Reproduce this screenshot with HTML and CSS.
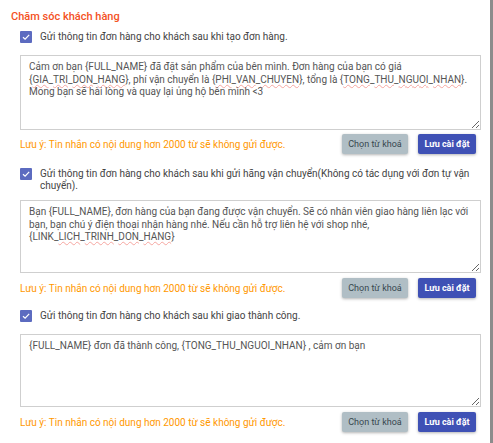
FILE: index.html
```html
<!DOCTYPE html>
<html lang="vi">
<head>
<meta charset="utf-8">
<title>Chăm sóc khách hàng</title>
<link rel="stylesheet" href="styles.css">
</head>
<body>
<div class="page">
  <h3 class="title">Chăm sóc khách hàng</h3>

  <div class="section s1">
    <label class="check-row">
      <span class="checkbox"><svg viewBox="0 0 12 12" width="12" height="12"><path d="M3 6.2 L5.1 8.2 L9.2 3.8" fill="none" stroke="#fff" stroke-width="1.2"/></svg></span>
      <span class="label">Gửi thông tin đơn hàng cho khách sau khi tạo đơn hàng.</span>
    </label>
    <div class="textarea">Cảm ơn bạn {FULL_NAME} đã đặt sản phẩm của bên mình. Đơn hàng của bạn có giá {<span class="sp">GIA</span>_<span class="sp">TRI</span>_<span class="sp">DON</span>_<span class="sp">HANG</span>}, phí vận chuyển là {<span class="sp">PHI</span>_<span class="sp">VAN</span>_<span class="sp">CHUYEN</span>}, tổng là {<span class="sp">TONG</span>_<span class="sp">THU</span>_<span class="sp">NGUOI</span>_<span class="sp">NHAN</span>}. Mong bạn sẽ hài lòng và quay lại ủng hộ bên mình &lt;3</div>
    <div class="footer">
      <span class="note">Lưu ý: Tin nhắn có nội dung hơn 2000 từ sẽ không gửi được.</span>
      <div class="actions">
        <button class="btn btn-grey">Chọn từ khoá</button>
        <button class="btn btn-primary">Lưu cài đặt</button>
      </div>
    </div>
  </div>

  <div class="section s2">
    <label class="check-row">
      <span class="checkbox"><svg viewBox="0 0 12 12" width="12" height="12"><path d="M3 6.2 L5.1 8.2 L9.2 3.8" fill="none" stroke="#fff" stroke-width="1.2"/></svg></span>
      <span class="label">Gửi thông tin đơn hàng cho khách sau khi gửi hãng vận chuyển(Không có tác dụng với đơn tự vận chuyển).</span>
    </label>
    <div class="textarea">Bạn {FULL_NAME}, đơn hàng của bạn đang được vận chuyển. Sẽ có nhân viên giao hàng liên lạc với bạn, bạn chú ý điện thoại nhận hàng nhé. Nếu cần hỗ trợ liên hệ với shop nhé, {LINK_<span class="sp">LICH</span>_<span class="sp">TRINH</span>_<span class="sp">DON</span>_<span class="sp">HANG</span>}</div>
    <div class="footer">
      <span class="note">Lưu ý: Tin nhắn có nội dung hơn 2000 từ sẽ không gửi được.</span>
      <div class="actions">
        <button class="btn btn-grey">Chọn từ khoá</button>
        <button class="btn btn-primary">Lưu cài đặt</button>
      </div>
    </div>
  </div>

  <div class="section s3">
    <label class="check-row">
      <span class="checkbox"><svg viewBox="0 0 12 12" width="12" height="12"><path d="M3 6.2 L5.1 8.2 L9.2 3.8" fill="none" stroke="#fff" stroke-width="1.2"/></svg></span>
      <span class="label">Gửi thông tin đơn hàng cho khách sau khi giao thành công.</span>
    </label>
    <div class="textarea">{FULL_NAME} đơn đã thành công, {TONG_THU_NGUOI_NHAN} , cảm ơn bạn</div>
    <div class="footer">
      <span class="note">Lưu ý: Tin nhắn có nội dung hơn 2000 từ sẽ không gửi được.</span>
      <div class="actions">
        <button class="btn btn-grey">Chọn từ khoá</button>
        <button class="btn btn-primary">Lưu cài đặt</button>
      </div>
    </div>
  </div>
</div>
</body>
</html>
```
FILE: styles.css
```css
* { box-sizing: border-box; }
html, body { margin: 0; padding: 0; background: #fff; }
body { font-family: Roboto, "Noto Sans", Arial, sans-serif; }

.page {
  width: 493px;
  height: 443px;
  border-right: 3px solid #8c8c8c;
  padding: 10px 0 0 11px;
  overflow: hidden;
}

.title {
  margin: 0;
  font-size: 11px;
  line-height: 13px;
  font-weight: 500;
  color: #f4511e;
}

.section {
  margin-left: 9px;
  width: 461px;
}

.s1 { margin-top: 8px; }
.s2 { margin-top: 14px; }
.s3 { margin-top: 12px; }

.check-row {
  display: flex;
  align-items: flex-start;
  gap: 8px;
}

.checkbox {
  flex: 0 0 12px;
  width: 12px;
  height: 12px;
  border-radius: 1px;
  background: #5c6bc0;
  display: flex;
}

.label {
  font-size: 10px;
  line-height: 12px;
  color: #444;
}

.textarea {
  margin-top: 12px;
  height: 75px;
  border: 1px solid #cfcfcf;
  padding: 5px 8px;
  font-size: 10px;
  line-height: 12.5px;
  color: #555;
  overflow: auto;
  resize: vertical;
}

.s2 .textarea { margin-top: 8px; height: 73px; }
.s3 .textarea { margin-top: 12px; height: 73px; }

.sp {
  text-decoration: underline wavy #f6a6a0;
  text-decoration-thickness: 1px;
  text-underline-offset: 1px;
}

.footer {
  margin-top: 4px;
  display: flex;
  align-items: center;
  justify-content: space-between;
  padding-right: 5px;
}
.s2 .footer, .s3 .footer { margin-top: 5px; }

.note {
  font-size: 10px;
  color: #ff9800;
}

.actions {
  display: flex;
  gap: 10px;
}

.btn {
  height: 20px;
  border: 0;
  border-radius: 2px;
  font-family: Roboto, Arial, sans-serif;
  font-size: 9px;
  padding: 0;
  box-shadow: 0 1px 3px rgba(0, 0, 0, 0.3);
}

.btn-grey {
  width: 66px;
  background: #b0bec5;
  color: #37474f;
}

.btn-primary {
  width: 58px;
  background: #3f51b5;
  color: #fff;
  font-weight: 700;
}
```
